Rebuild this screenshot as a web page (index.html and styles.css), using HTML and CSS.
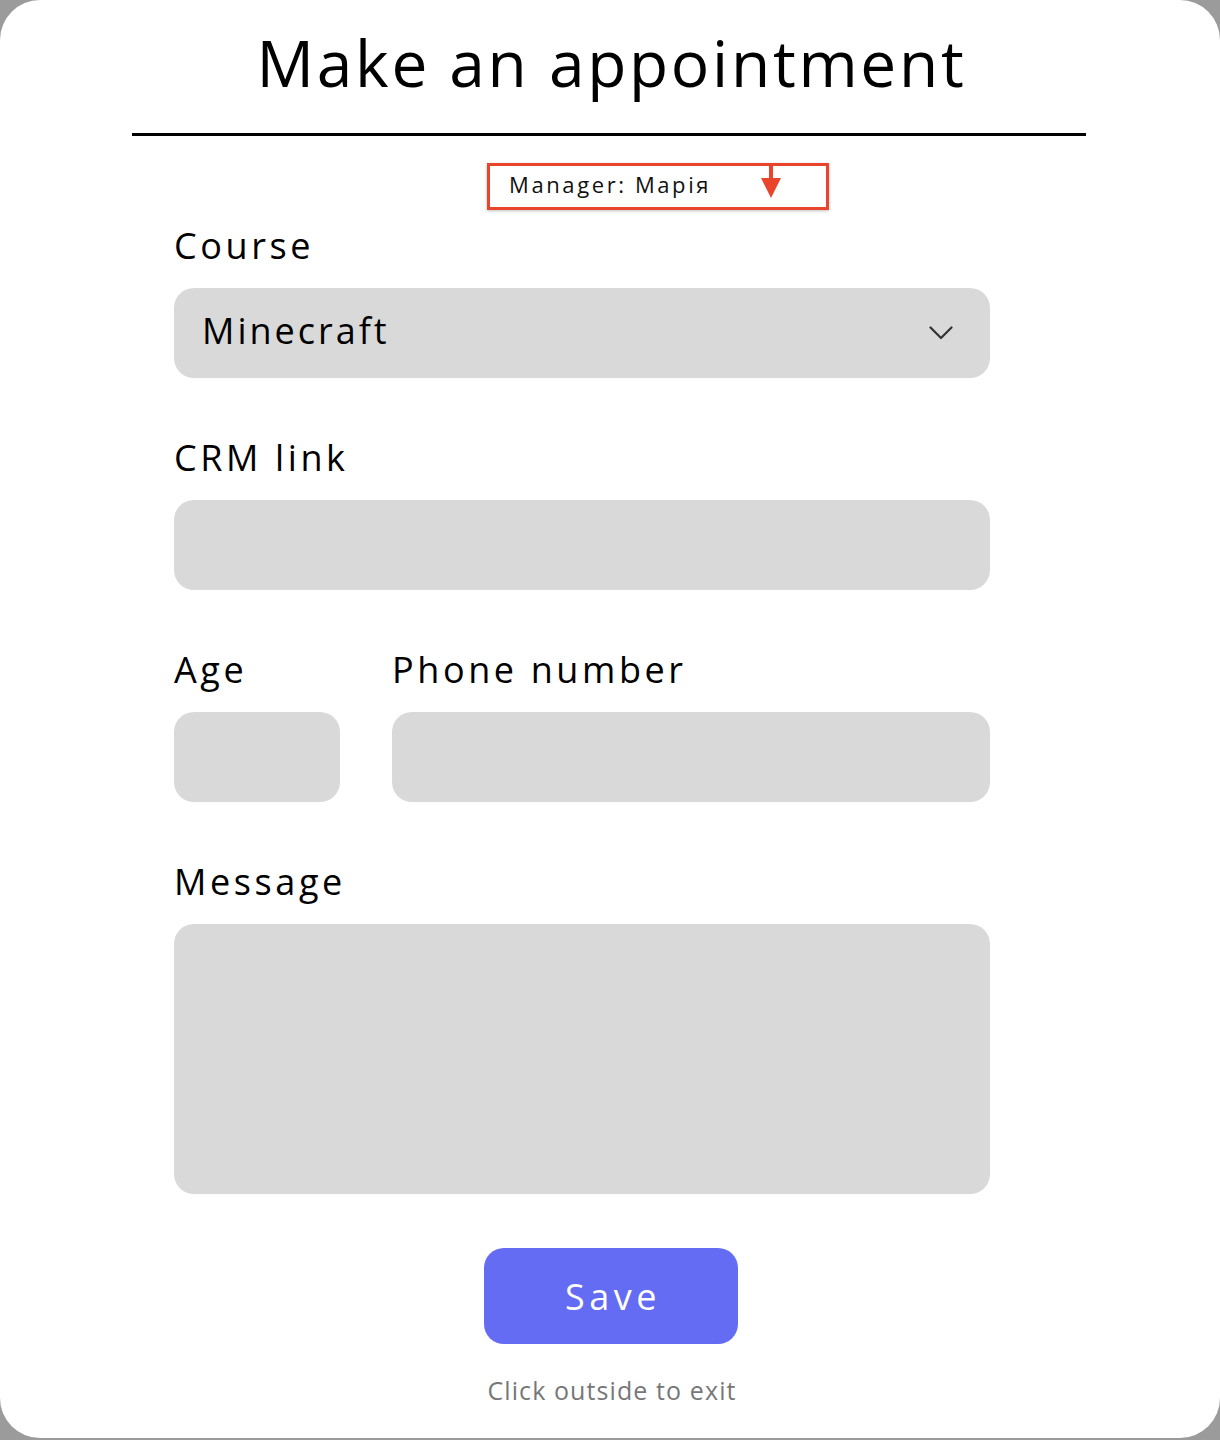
FILE: index.html
```html
<!DOCTYPE html>
<html lang="en">
<head>
<meta charset="utf-8">
<title>Make an appointment</title>
<link rel="stylesheet" href="styles.css">
</head>
<body>
<div class="card">
  <h1 class="title">Make an appointment</h1>
  <div class="rule"></div>
  <div class="form">
    <div class="manager">
      <span class="manager-text">Manager: Марія</span>
      <svg class="manager-arrow" width="22" height="36" viewBox="0 0 22 36">
        <rect x="9" y="0" width="4" height="16" fill="#e8452c"/>
        <polygon points="1,14 21,14 11,34" fill="#e8452c"/>
      </svg>
    </div>

    <div class="field">
      <label class="label">Course</label>
      <div class="input select">
        <span class="select-value">Minecraft</span>
        <svg class="chevron" width="24" height="14" viewBox="0 0 24 14">
          <polyline points="1.5,1.5 12,12 22.5,1.5" fill="none" stroke="#333" stroke-width="2.2" stroke-linecap="round" stroke-linejoin="round"/>
        </svg>
      </div>
    </div>

    <div class="field">
      <label class="label">CRM link</label>
      <div class="input"></div>
    </div>

    <div class="row">
      <div class="field age">
        <label class="label">Age</label>
        <div class="input"></div>
      </div>
      <div class="field phone">
        <label class="label">Phone number</label>
        <div class="input"></div>
      </div>
    </div>

    <div class="field">
      <label class="label">Message</label>
      <div class="input textarea"></div>
    </div>

    <div class="actions">
      <button class="save">Save</button>
      <p class="hint">Click outside to exit</p>
    </div>
  </div>
</div>
</body>
</html>
```

FILE: styles.css
```css
* { box-sizing: border-box; }

html, body {
  margin: 0;
  padding: 0;
}

body {
  background: #9b9b9b;
  font-family: "Open Sans", "Noto Sans", sans-serif;
  color: #000;
  width: 1220px;
  height: 1440px;
  overflow: hidden;
}

.card {
  width: 1220px;
  height: 1438px;
  background: #fff;
  border-radius: 40px;
  padding-top: 24px;
}

.title {
  margin: 0;
  font-weight: 400;
  font-size: 64px;
  line-height: 78px;
  text-align: center;
  letter-spacing: 2.7px;
  padding-left: 3px;
}

.rule {
  margin: 31px 134px 0 132px;
  height: 3px;
  background: #000;
}

.form {
  padding-left: 174px;
  width: 990px;
  display: flex;
  flex-direction: column;
}

.manager {
  position: relative;
  margin: 27px 0 0 313px;
  width: 342px;
  height: 47px;
  border: 3px solid #e8452c;
  box-shadow: 0 1px 3px rgba(0,0,0,0.25);
  padding-left: 19px;
  padding-bottom: 5px;
  display: flex;
  align-items: center;
}

.manager-text {
  font-size: 22px;
  line-height: 30px;
  letter-spacing: 2.6px;
  color: #111;
}

.manager-arrow {
  position: absolute;
  left: 270px;
  top: -2px;
}

.field {
  display: flex;
  flex-direction: column;
  margin-top: 58px;
}

.manager + .field { margin-top: 14px; }

.label {
  font-size: 36px;
  line-height: 44px;
  margin-bottom: 20px;
  letter-spacing: 3.6px;
}

.input {
  height: 90px;
  background: #d9d9d9;
  border-radius: 20px;
}

.select {
  display: flex;
  align-items: center;
  justify-content: space-between;
  padding: 0 37px 0 28px;
}

.select-value {
  font-size: 36px;
  line-height: 44px;
  letter-spacing: 3px;
  margin-top: -4px;
}

.chevron { margin-top: 0; }

.textarea { height: 270px; }

.row {
  display: flex;
  gap: 52px;
}

.age { width: 166px; }
.phone { flex: 1; }

.actions {
  display: flex;
  flex-direction: column;
  align-items: center;
  margin-top: 54px;
  margin-left: -174px;
  width: 1220px;
}

.save {
  width: 254px;
  height: 96px;
  border: none;
  border-radius: 20px;
  background: #636cf2;
  color: #fff;
  font-family: inherit;
  font-size: 36px;
  letter-spacing: 4.5px;
  padding: 0 0 0 4px;
  margin-left: 2px;
}

.hint {
  margin: 30px 0 0 4px;
  font-size: 25px;
  line-height: 32px;
  letter-spacing: 1.1px;
  color: #777;
}
```
